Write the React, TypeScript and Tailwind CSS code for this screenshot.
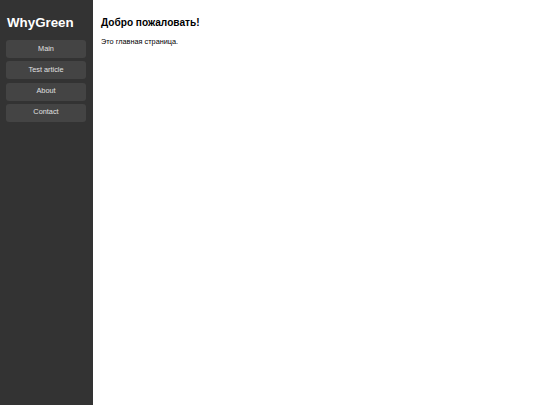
const links = ["Main", "Test article", "About", "Contact"]

const App = () => {
  return (
    <div className="flex min-h-screen font-['Liberation_Sans',Arial,sans-serif]">
      <aside className="w-[93px] shrink-0 bg-[#333333] px-[6px] pt-[15px]">
        <h1 className="pl-px text-[13.33px] font-bold leading-[15px] text-white">WhyGreen</h1>
        <nav className="mt-[10px] flex flex-col gap-[3.33px]">
          {links.map((link) => (
            <a
              key={link}
              href="#"
              className="flex h-[18px] w-[80px] items-center justify-center rounded-[3px] bg-[#444444] text-[7.33px] text-[#e0e0e0]"
            >
              {link}
            </a>
          ))}
        </nav>
      </aside>
      <main className="flex-1 bg-white px-[8px] pt-[17px]">
        <h2 className="text-[10.1px] font-bold leading-[12px] text-black">Добро пожаловать!</h2>
        <p className="mt-[8px] text-[7.33px] leading-[9px] text-black">Это главная страница.</p>
      </main>
    </div>
  )
}

export default App
